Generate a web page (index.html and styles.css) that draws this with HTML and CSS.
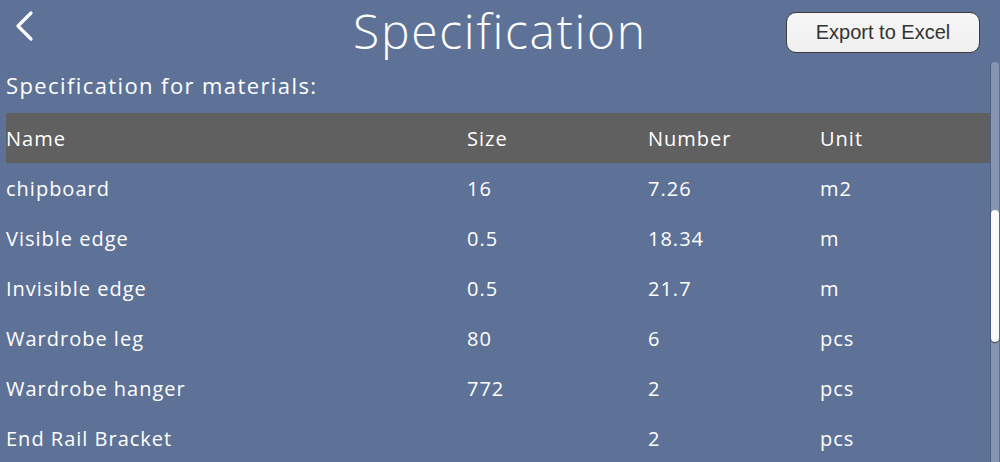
FILE: index.html
```html
<!DOCTYPE html>
<html>
<head>
<meta charset="utf-8">
<link rel="stylesheet" href="styles.css">
</head>
<body>
<div class="page">
  <header class="topbar">
    <div class="back">
      <svg width="24" height="32" viewBox="0 0 24 32"><path d="M19 3 L6 16 L19 29" fill="none" stroke="#fff" stroke-width="3.2" stroke-linecap="round" stroke-linejoin="round"/></svg>
    </div>
    <h1 class="title">Specification</h1>
    <button class="export">Export to Excel</button>
  </header>
  <div class="subtitle">Specification for materials:</div>
  <div class="table">
    <div class="row head"><span>Name</span><span>Size</span><span>Number</span><span>Unit</span></div>
    <div class="row"><span>chipboard</span><span>16</span><span>7.26</span><span>m2</span></div>
    <div class="row"><span>Visible edge</span><span>0.5</span><span>18.34</span><span>m</span></div>
    <div class="row"><span>Invisible edge</span><span>0.5</span><span>21.7</span><span>m</span></div>
    <div class="row"><span>Wardrobe leg</span><span>80</span><span>6</span><span>pcs</span></div>
    <div class="row"><span>Wardrobe hanger</span><span>772</span><span>2</span><span>pcs</span></div>
    <div class="row"><span>End Rail Bracket</span><span></span><span>2</span><span>pcs</span></div>
  </div>
  <div class="scrollbar"><div class="thumb"></div></div>
</div>
</body>
</html>
```
FILE: styles.css
```css
html, body {
  margin: 0;
  padding: 0;
}
body {
  background: #5e7297;
  font-family: "Open Sans", "DejaVu Sans", sans-serif;
  color: #fff;
  width: 1000px;
  height: 462px;
  overflow: hidden;
}
.page {
  position: relative;
  height: 462px;
}
.topbar {
  display: flex;
  align-items: center;
  height: 64px;
  position: relative;
}
.back {
  width: 24px;
  height: 32px;
  margin-left: 12px;
  margin-top: -12px;
}
.back svg { display: block; }
.title {
  position: absolute;
  left: 0;
  right: 0;
  top: 0;
  margin: 0;
  text-align: center;
  font-weight: 300;
  font-size: 48px;
  line-height: 62px;
  letter-spacing: 1.7px;
  pointer-events: none;
}
.export {
  margin-left: auto;
  margin-right: 20px;
  width: 194px;
  height: 41px;
  border: 1.5px solid #3c3c3c;
  border-radius: 10px;
  background: linear-gradient(#f6f6f6, #efefef);
  font-family: "Liberation Sans", Arial, sans-serif;
  font-size: 20px;
  color: #333;
  padding: 0;
}
.subtitle {
  font-size: 22px;
  letter-spacing: 1.4px;
  padding-left: 6px;
  height: 49px;
  line-height: 42px;
}
.table {
  width: 984px;
  margin-left: 6px;
  font-size: 20px;
  letter-spacing: 1px;
}
.row {
  display: grid;
  grid-template-columns: 461px 181px 172px 1fr;
  height: 50px;
  align-items: center;
}
.row span { white-space: nowrap; }
.row.head {
  background: #606060;
}
.scrollbar {
  position: absolute;
  right: 1px;
  top: 62px;
  bottom: 0;
  width: 8px;
  background: #8895b0;
  border-left: 1px solid #4e5f80;
  border-radius: 4px 4px 0 0;
}
.thumb {
  position: absolute;
  left: 0;
  right: 0;
  top: 148px;
  height: 132px;
  background: #fafafa;
  border-radius: 4px;
  box-shadow: 0 1px 1px #3a3a3a;
}
```
